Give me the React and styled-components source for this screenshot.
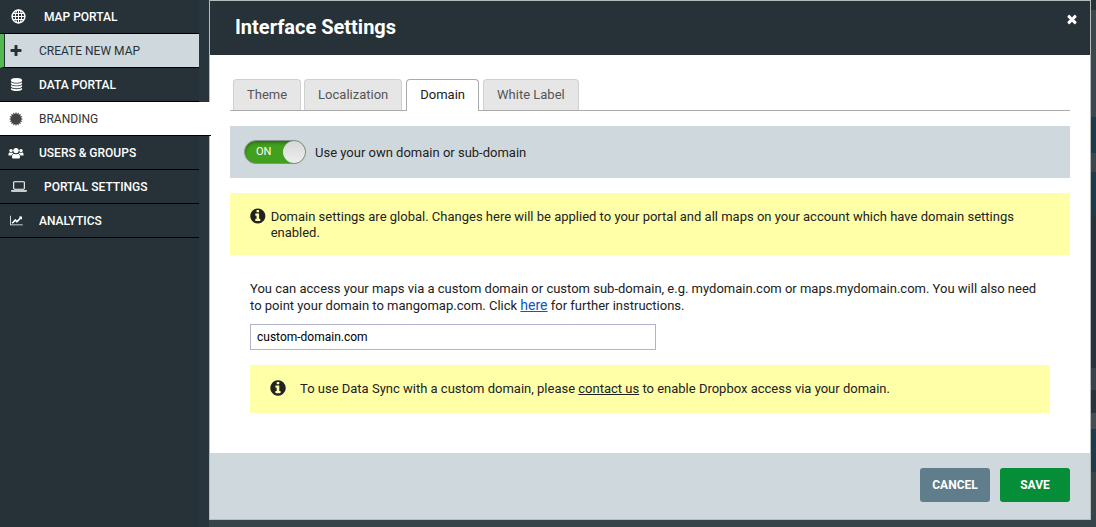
import React from "react";
import styled, { createGlobalStyle } from "styled-components";

const GlobalStyle = createGlobalStyle`
  *, *::before, *::after { box-sizing: border-box; }
  body {
    margin: 0;
    background: #263238;
    color: #222;
    font-family: Roboto, "Liberation Sans", sans-serif;
    font-size: 13px;
    line-height: 16px;
  }
`;

const Page = styled.div`
  display: flex;
  min-height: 100vh;
  background:
    linear-gradient(
      #263238 10px, #3a474c 10px 117px, #1f3b4b 117px 153px, #3a474f 153px 172px,
      #1f3b4b 172px 216px, #27353b 216px 368px, #37444b 368px 390px, #27353b 390px 413px,
      #414e54 413px 429px, #1f3b4b 429px 472px, #37444a 472px
    ) right top / 5px 100% no-repeat,
    linear-gradient(to right, #263238 199px, #28353d 199px 209px, #37444a 209px);
`;

const Sidebar = styled.nav`
  flex: none;
  width: 209px;
`;

const NavItem = styled.a`
  display: flex;
  align-items: center;
  width: 199px;
  height: 34px;
  padding-left: 8px;
  gap: 15px;
  border-bottom: 1px solid #000;
  color: #fff;
  font-size: 12px;
  font-weight: 500;
  text-decoration: none;
  text-transform: uppercase;
`;

const CreateItem = styled(NavItem)`
  padding-left: 4px;
  border-left: 4px solid #52b94f;
  box-shadow: inset 1px 0 #263238;
  background: #cfd8dd;
  color: #263238;
  font-weight: 400;
`;

const CurrentItem = styled(NavItem)`
  position: relative;
  width: 211px;
  background: #fff;
  color: #333;
  font-weight: 400;
`;

const IconSlot = styled.span`
  flex: none;
  display: flex;
  justify-content: center;
  width: ${(p) => (p.$wide ? "21px" : "16px")};
`;

const Dialog = styled.main`
  flex: 1;
  display: flex;
  flex-direction: column;
  min-width: 0;
  margin: 0 5px 7px 0;
  border: 1px solid #b5bbbb;
  background: #fff;
`;

const DialogHeader = styled.header`
  display: flex;
  justify-content: space-between;
  align-items: flex-start;
  padding: 11px 11px 13px 25px;
  background: #263238;
`;

const Title = styled.h1`
  margin: 0;
  color: #fff;
  font-size: 20px;
  font-weight: 700;
  line-height: 30px;
`;

const CloseButton = styled.button`
  display: flex;
  padding: 0;
  border: 0;
  background: none;
  color: #fff;
  cursor: pointer;
`;

const DialogBody = styled.div`
  flex: 1;
  padding: 24px 20px 40px;
`;

const TabBar = styled.div`
  display: flex;
  gap: 3px;
  padding-left: 3px;
  border-bottom: 1px solid #aaa;
`;

const Tab = styled.button`
  height: ${(p) => (p.$active ? "32px" : "31px")};
  margin: ${(p) => (p.$active ? "0 0 -1px 1px" : "0")};
  padding: ${(p) => (p.$active ? "0 13px 1px" : "0 13px")};
  border: 1px solid ${(p) => (p.$active ? "#aaa" : "#d0d0d0")};
  border-bottom: 0;
  border-radius: 4px 4px 0 0;
  background: ${(p) => (p.$active ? "#fff" : "#e6e6e6")};
  color: ${(p) => (p.$active ? "#212121" : "#555")};
  font: inherit;
  line-height: 30px;
  cursor: pointer;

  &:last-child {
    margin-left: 1px;
  }
`;

const ToggleRow = styled.label`
  display: flex;
  align-items: center;
  gap: 9px;
  height: 52px;
  margin-top: 15px;
  padding-left: 14px;
  background: #cfd8dd;
`;

const ToggleText = styled.span`
  padding-top: 1px;
`;

const Switch = styled.span`
  display: grid;
  width: 62px;
  height: 24px;
  border: 1px solid #8a9090;
  border-radius: 12px;
  background: #41a01d;
  box-shadow: inset 0 2px 3px rgba(0, 0, 0, 0.3);
`;

const SwitchInput = styled.input`
  grid-area: 1 / 1;
  appearance: none;
  justify-self: end;
  width: 22px;
  height: 22px;
  margin: 0;
  border-radius: 50%;
  background: linear-gradient(#d8d8d8, #eee);
  box-shadow: 0 0 1px #777;
`;

const SwitchText = styled.span`
  grid-area: 1 / 1;
  padding-left: 11px;
  color: #fff;
  font-size: 11px;
  line-height: 21px;
`;

const Notice = styled.div`
  display: flex;
  align-items: flex-start;
  gap: 4px;
  margin-top: 15px;
  padding: 14px 20px 14px 19px;
  background: #ffffa8;
`;

const SyncNotice = styled(Notice)`
  gap: 13px;
  padding-bottom: 16px;
`;

const NoticeText = styled.p`
  margin: 0;
  padding: 2px 0 0;
`;

const Section = styled.section`
  margin-top: 25px;
  padding: 0 20px;
`;

const Intro = styled.p`
  margin: 0;
  line-height: 17px;
`;

const HereLink = styled.a`
  color: #0b57c4;
  font-size: 14px;
`;

const PlainLink = styled.a`
  color: inherit;
`;

const DomainInput = styled.input`
  display: block;
  width: 406px;
  max-width: 100%;
  height: 26px;
  margin-top: 10px;
  padding: 0 6px;
  border: 1px solid #b3b3cc;
  background: #fff;
  color: #000;
  font: inherit;
  font-size: 12px;
`;

const DialogFooter = styled.footer`
  display: flex;
  justify-content: flex-end;
  gap: 10px;
  padding: 15px 20px 17px;
  background: #cfd8dd;
`;

const ActionButton = styled.button`
  min-width: 70px;
  height: 34px;
  padding: 0 12px;
  border: 0;
  border-radius: 3px;
  background: ${(p) => (p.$primary ? "#058d38" : "#607d8b")};
  color: #fff;
  font: inherit;
  font-size: 12px;
  font-weight: 700;
  cursor: pointer;
`;

const paths = {
  plus: "M1600 736v192q0 40-28 68t-68 28h-416v416q0 40-28 68t-68 28h-192q-40 0-68-28t-28-68v-416h-416q-40 0-68-28t-28-68v-192q0-40 28-68t68-28h416v-416q0-40 28-68t68-28h192q40 0 68 28t28 68v416h416q40 0 68 28t28 68z",
  close: "M1490 1322q0 40-28 68l-136 136q-28 28-68 28t-68-28l-294-294-294 294q-28 28-68 28t-68-28l-136-136q-28-28-28-68t28-68l294-294-294-294q-28-28-28-68t28-68l136-136q28-28 68-28t68 28l294 294 294-294q28-28 68-28t68 28l136 136q28 28 28 68t-28 68l-294 294 294 294q28 28 28 68z",
  info: "M1152 1376v-160q0-14-9-23t-23-9h-96v-512q0-14-9-23t-23-9h-320q-14 0-23 9t-9 23v160q0 14 9 23t23 9h96v320h-96q-14 0-23 9t-9 23v160q0 14 9 23t23 9h448q14 0 23-9t9-23zm-128-896v-160q0-14-9-23t-23-9h-192q-14 0-23 9t-9 23v160q0 14 9 23t23 9h192q14 0 23-9t9-23zm640 416q0 209-103 385.5t-279.5 279.5-385.5 103-385.5-103-279.5-279.5-103-385.5 103-385.5 279.5-279.5 385.5-103 385.5 103 279.5 279.5 103 385.5z",
  database: "M896 768q237 0 443-43t325-127v170q0 69-103 128t-280 93.5-385 34.5-385-34.5-280-93.5-103-128v-170q119 84 325 127t443 43zm0 768q237 0 443-43t325-127v170q0 69-103 128t-280 93.5-385 34.5-385-34.5-280-93.5-103-128v-170q119 84 325 127t443 43zm0-384q237 0 443-43t325-127v170q0 69-103 128t-280 93.5-385 34.5-385-34.5-280-93.5-103-128v-170q119 84 325 127t443 43zm0-1152q208 0 385 34.5t280 93.5 103 128v128q0 69-103 128t-280 93.5-385 34.5-385-34.5-280-93.5-103-128v-128q0-69 103-128t280-93.5 385-34.5z",
  chart: "M2048 1536v128h-2048v-1536h128v1408h1920zm-128-1248v435q0 21-19.5 29.5t-35.5-7.5l-121-121-633 633q-10 10-23 10t-23-10l-233-233-416 416-192-192 585-585q10-10 23-10t23 10l233 233 464-464-121-121q-16-16-7.5-35.5t29.5-19.5h435q14 0 23 9t9 23z",
  laptop: "M416 1280q-66 0-113-47t-47-113v-704q0-66 47-113t113-47h1088q66 0 113 47t47 113v704q0 66-47 113t-113 47h-1088zm-32-864v704q0 13 9.5 22.5t22.5 9.5h1088q13 0 22.5-9.5t9.5-22.5v-704q0-13-9.5-22.5t-22.5-9.5h-1088q-13 0-22.5 9.5t-9.5 22.5zm1376 928h160v96q0 40-47 68t-113 28h-1600q-66 0-113-28t-47-68v-96h1760z",
};

const burst = Array.from({ length: 32 }, (_, i) => {
  const r = i % 2 ? 5 : 7;
  const a = (i * Math.PI) / 16;
  return `${(8 + r * Math.sin(a)).toFixed(2)},${(8 - r * Math.cos(a)).toFixed(2)}`;
}).join(" ");

function Icon({ name, size = 14, box = 1792 }) {
  return (
    <svg width={Math.round((size * box) / 1792)} height={size} viewBox={`0 0 ${box} 1792`} fill="currentColor" aria-hidden="true">
      <path d={paths[name]} />
    </svg>
  );
}

function Globe() {
  return (
    <svg width="15" height="15" viewBox="0 0 15 15" fill="none" stroke="currentColor" aria-hidden="true">
      <circle cx="7.5" cy="7.5" r="6.4" strokeWidth="1.5" />
      <ellipse cx="7.5" cy="7.5" rx="3.2" ry="6.4" />
      <path d="M7.5 1v13M1 7.5h13M2 4.5h11M2 10.5h11" />
    </svg>
  );
}

function Burst() {
  return (
    <svg width="16" height="16" viewBox="0 0 16 16" fill="#444" aria-hidden="true">
      <polygon points={burst} />
    </svg>
  );
}

function People() {
  return (
    <svg width="16" height="14" viewBox="0 0 16 14" fill="currentColor" aria-hidden="true">
      <circle cx="3" cy="4.6" r="1.7" />
      <circle cx="13" cy="4.6" r="1.7" />
      <circle cx="8" cy="4.6" r="2.7" />
      <path d="M.5 9.6V8c0-1 .5-1.6 1.2-1.6.8.5 1.9.5 2.7.1.3.4.5.7.9 1-.9.4-1.5 1.1-1.8 2.1H.5zM15.5 9.6V8c0-1-.5-1.6-1.2-1.6-.8.5-1.9.5-2.7.1-.3.4-.5.7-.9 1 .9.4 1.5 1.1 1.8 2.1h3z" />
      <path d="M4 11.2c0-2 .7-3.5 2.1-3.5 1.2.8 2.6.8 3.8 0 1.4 0 2.1 1.5 2.1 3.5 0 .8-.6 1.3-1.4 1.3H5.400c-.8 0-1.4-.5-1.400-1.3z" />
    </svg>
  );
}

export default function App() {
  return (
    <>
      <GlobalStyle />
      <Page>
        <Sidebar aria-label="Portal">
          <NavItem href="#maps"><IconSlot $wide><Globe /></IconSlot>Map Portal</NavItem>
          <CreateItem href="#new"><IconSlot><Icon name="plus" /></IconSlot>Create New Map</CreateItem>
          <NavItem href="#data"><IconSlot><Icon name="database" size={13} /></IconSlot>Data Portal</NavItem>
          <CurrentItem href="#branding" aria-current="page"><IconSlot><Burst /></IconSlot>Branding</CurrentItem>
          <NavItem href="#users"><IconSlot><People /></IconSlot>Users &amp; Groups</NavItem>
          <NavItem href="#settings"><IconSlot $wide><Icon name="laptop" size={15} box={1920} /></IconSlot>Portal Settings</NavItem>
          <NavItem href="#analytics"><IconSlot><Icon name="chart" size={11} box={2048} /></IconSlot>Analytics</NavItem>
        </Sidebar>
        <Dialog>
          <DialogHeader>
            <Title>Interface Settings</Title>
            <CloseButton type="button" aria-label="Close"><Icon name="close" /></CloseButton>
          </DialogHeader>
          <DialogBody>
            <TabBar role="tablist">
              <Tab type="button" role="tab">Theme</Tab>
              <Tab type="button" role="tab">Localization</Tab>
              <Tab type="button" role="tab" aria-selected="true" $active>Domain</Tab>
              <Tab type="button" role="tab">White Label</Tab>
            </TabBar>
            <ToggleRow>
              <Switch>
                <SwitchText>ON</SwitchText>
                <SwitchInput type="checkbox" role="switch" defaultChecked />
              </Switch>
              <ToggleText>Use your own domain or sub-domain</ToggleText>
            </ToggleRow>
            <Notice>
              <Icon name="info" size={18} />
              <NoticeText>
                Domain settings are global. Changes here will be applied to your portal and all maps on your account which have domain settings enabled.
              </NoticeText>
            </Notice>
            <Section>
              <Intro id="domain-help">
                You can access your maps via a custom domain or custom sub-domain, e.g. mydomain.com or maps.mydomain.com. You will also need to point your domain to mangomap.com. Click <HereLink href="#instructions">here</HereLink> for further instructions.
              </Intro>
              <DomainInput type="text" aria-label="Custom domain" aria-describedby="domain-help" defaultValue="custom-domain.com" />
              <SyncNotice>
                <Icon name="info" size={18} />
                <NoticeText>
                  To use Data Sync with a custom domain, please <PlainLink href="#contact">contact us</PlainLink> to enable Dropbox access via your domain.
                </NoticeText>
              </SyncNotice>
            </Section>
          </DialogBody>
          <DialogFooter>
            <ActionButton type="button">CANCEL</ActionButton>
            <ActionButton type="button" $primary>SAVE</ActionButton>
          </DialogFooter>
        </Dialog>
      </Page>
    </>
  );
}
